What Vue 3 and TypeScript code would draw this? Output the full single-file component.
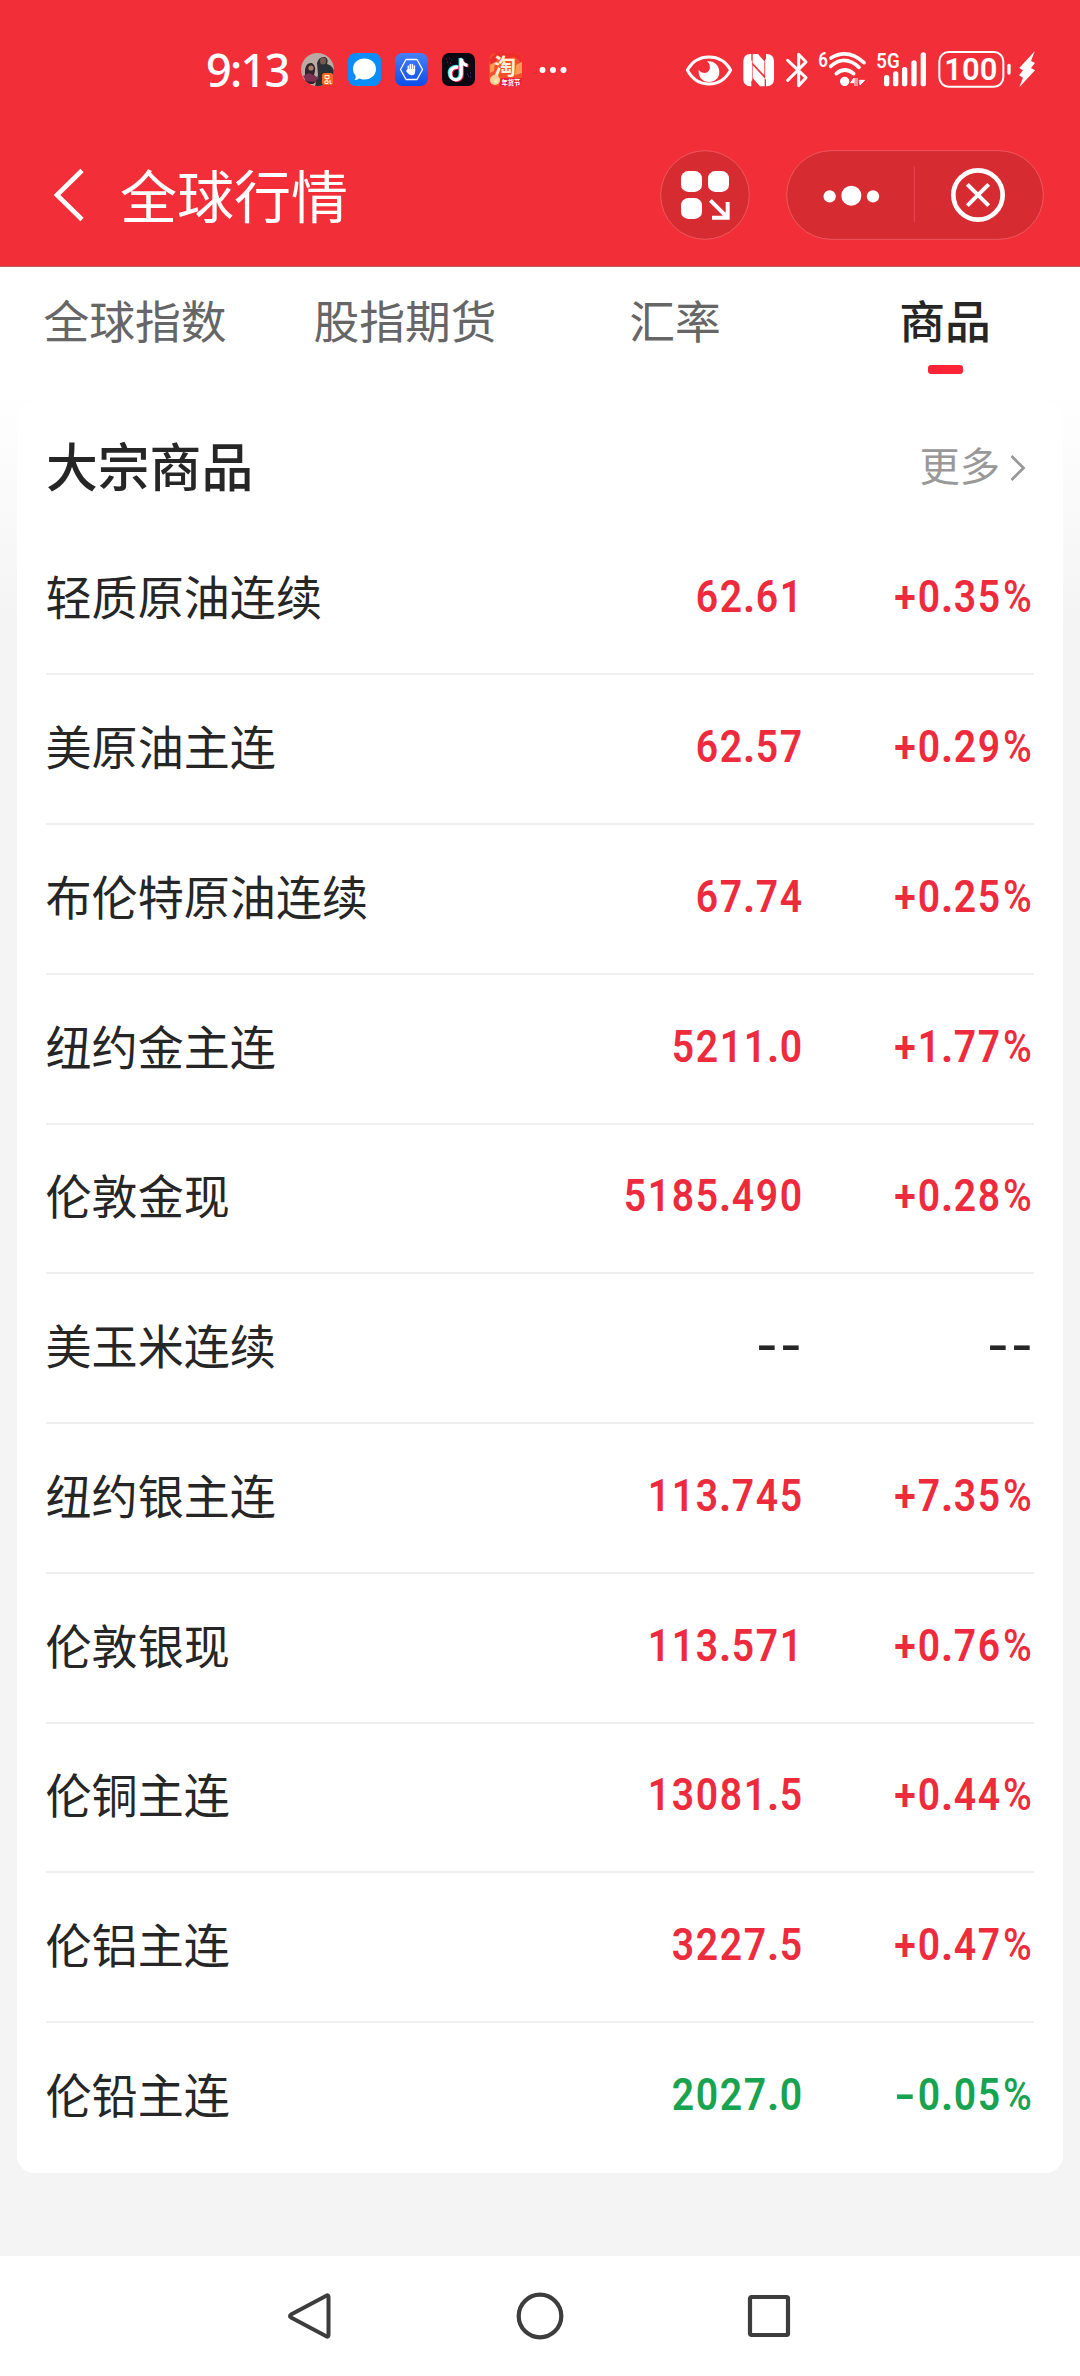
<script setup lang="ts">
interface Quote {
  name: string
  price: string
  change: string
}

const tabs: string[] = ['全球指数', '股指期货', '汇率', '商品']
const activeTab = '商品'

const quotes: Quote[] = [
  { name: '轻质原油连续', price: '62.61', change: '+0.35%' },
  { name: '美原油主连', price: '62.57', change: '+0.29%' },
  { name: '布伦特原油连续', price: '67.74', change: '+0.25%' },
  { name: '纽约金主连', price: '5211.0', change: '+1.77%' },
  { name: '伦敦金现', price: '5185.490', change: '+0.28%' },
  { name: '美玉米连续', price: '--', change: '--' },
  { name: '纽约银主连', price: '113.745', change: '+7.35%' },
  { name: '伦敦银现', price: '113.571', change: '+0.76%' },
  { name: '伦铜主连', price: '13081.5', change: '+0.44%' },
  { name: '伦铝主连', price: '3227.5', change: '+0.47%' },
  { name: '伦铅主连', price: '2027.0', change: '-0.05%' },
]

function tone(q: Quote): string {
  if (q.change.startsWith('+')) return 'up'
  return q.change === '--' ? 'flat' : 'down'
}

function glyphClass(ch: string): string {
  if (ch === '-') return 'dash'
  if (ch === '.') return 'dot'
  return ch === '%' ? 'pct' : 'digit'
}
</script>

<template>
  <div class="screen">
    <header class="top">
      <div class="status">
        <span class="clock">9:13</span>
        <div class="apps">
          <svg width="33" height="33" viewBox="0 0 33 33">
            <defs><clipPath id="av"><circle cx="16.5" cy="16.5" r="16.5" /></clipPath></defs>
            <g clip-path="url(#av)">
              <rect width="33" height="33" fill="#b9aba3" />
              <path d="M16 10Q18 3 24 4Q28 6 26 11Q33 13 33 20V33H14L17 22Z" fill="#2b3037" />
              <ellipse cx="22" cy="8" rx="3" ry="3.6" fill="#765b50" />
              <path d="M4 17Q5 9 11 10Q16 13 13 22L18 27L12 31H4Z" fill="#33212b" />
              <path d="M2 23L8 20L18 25L14 29L5 28Z" fill="#7b3150" />
              <circle cx="10" cy="15" r="2.6" fill="#a77d6c" />
            </g>
            <rect x="21" y="20" width="11" height="12" rx="2.5" fill="#f4691e" />
            <path d="M24 22.500h4v3h-4zM24 28h3v2.500h-3zM26 25.500v2.500M29 27v3.500h1.500" fill="none" stroke="#fff" stroke-width="1" />
          </svg>
          <svg width="33" height="33" viewBox="0 0 33 33">
            <rect width="33" height="33" rx="7.500" fill="#0a8dfb" />
            <path d="M16.500 5.500C23 5.500 28 10 28 16S23 26.500 16.500 26.500C14.500 26.500 12.500 26 11 25.500C9.500 26.700 8 27 6.500 27C7.700 25.500 8 24 7.500 22.500C6 20.500 5 18.500 5 16C5 10 10 5.500 16.500 5.500Z" fill="#fff" />
          </svg>
          <svg width="33" height="33" viewBox="0 0 33 33">
            <defs><linearGradient id="bl" x1="0" y1="0" x2="0" y2="1"><stop offset="0" stop-color="#4581f8" /><stop offset="1" stop-color="#0d4de8" /></linearGradient></defs>
            <rect width="33" height="33" rx="7.500" fill="url(#bl)" />
            <path d="M11 6.500H22L27.500 16.500L22 26.500H11L5.500 16.500Z" fill="none" stroke="#fff" stroke-width="1.300" stroke-linejoin="round" />
            <path d="M13.300 18V13.300M15.300 17V11.500M17.400 17V11.500M19.400 18V13" stroke="#fff" stroke-width="1.500" stroke-linecap="round" />
            <path d="M12.600 16H20.100V19Q20 22.300 16.800 22.300Q14.500 22.300 13 20.500L10.800 17.800L12 17.300Z" fill="#fff" />
          </svg>
          <svg width="33" height="33" viewBox="0 0 33 33">
            <rect width="33" height="33" rx="7" fill="#0b0713" />
            <g fill="none" stroke-width="3.300">
              <path d="M16.300 14.200C12 13.700 8.300 16 8.300 20.300S11 26.800 14 26.800S19.200 24.600 19.200 21V5.500C19.500 9.500 22 12 25.500 12.300" transform="translate(-1 -.6)" stroke="#25e6e2" />
              <path d="M16.300 14.200C12 13.700 8.300 16 8.300 20.300S11 26.800 14 26.800S19.200 24.600 19.200 21V5.500C19.500 9.500 22 12 25.500 12.300" transform="translate(1 .6)" stroke="#fb2b5c" />
              <path d="M16.300 14.200C12 13.700 8.300 16 8.300 20.300S11 26.800 14 26.800S19.200 24.600 19.200 21V5.500C19.500 9.500 22 12 25.500 12.300" stroke="#fff" />
            </g>
            <path d="M4 6h1M7 5h1M9 7h1M5 9h1M8 10h1" stroke="#a01b49" stroke-width="1" />
            <path d="M25 21h1M28 20h1M26 23h1M28 24h1" stroke="#3845ae" stroke-width="1" />
          </svg>
          <svg width="33" height="33" viewBox="0 0 33 33">
            <rect width="33" height="33" rx="7" fill="#f6502b" />
            <path d="M0 7Q6 1 7 0H26Q33 0 33 10L26 4L8 6L3 14Z" fill="#ed2d2c" />
            <path d="M1 12L6 9L5 18L1 20ZM27 12L33 9V20L26 22Z" fill="#fb9b56" />
            <text class="cjk" x="5" y="20.500" font-size="22" font-weight="700" fill="#fff1d6">淘</text>
            <path d="M12 25H33V26Q33 33 26 33H10Z" fill="#e51d3a" />
            <text class="cjk" x="12.500" y="31.500" font-size="6.300" font-weight="700" fill="#fff">年货节</text>
            <circle cx="6" cy="27" r="5" fill="#fbd094" /><circle cx="7" cy="28" r="2" fill="#fff0b4" />
          </svg>
        </div>
        <svg class="more-dots" width="28" height="8" viewBox="0 0 28 8">
          <circle cx="3.500" cy="4" r="3" fill="#fff" /><circle cx="14" cy="4" r="3" fill="#fff" /><circle cx="24.500" cy="4" r="3" fill="#fff" />
        </svg>
        <div class="system">
          <svg width="46" height="38" viewBox="48 61 138 114">
            <path d="M52 118C82 66 152 66 182 118C152 174 82 174 52 118Z" fill="none" stroke="#fff" stroke-width="9" stroke-linejoin="round" />
            <path d="M111 92C133 89 148 105 148 124C148 143 134 154 117 154C98 154 84 139 86 117C94 128 109 130 116 121C123 112 120 99 111 92Z" fill="#fff" />
          </svg>
          <svg class="nfc" width="32" height="38" viewBox="221 61 96 114">
            <path d="M243 70Q222 71 222 92V146Q222 166 243 167H246V70Z" fill="#fff" />
            <path d="M292 70Q314 71 314 92V146Q314 166 292 167H290V70Z" fill="#fff" />
            <path d="M250 70H266L285 92V134L250 96Z" fill="#fff" />
            <path d="M250 104L286 143V167H272L250 142Z" fill="#fff" />
            <path d="M246 90V150M290 86V146" stroke="#fff" stroke-width="5" />
          </svg>
          <svg class="bt" width="24" height="38" viewBox="350 61 72 114">
            <path d="M355 89L410 141L388 165V71L410 94L355 149" fill="none" stroke="#fff" stroke-width="9" stroke-linejoin="round" stroke-linecap="round" />
          </svg>
          <svg class="wifi" width="49" height="38" viewBox="445 61 147 114">
            <text class="sans" x="446" y="108" font-size="60" font-weight="600" textLength="29" lengthAdjust="spacingAndGlyphs" fill="#fff">6</text>
            <g fill="none" stroke="#fff" stroke-width="11" stroke-linecap="round">
              <path d="M484 82Q534 52 583 96" /><path d="M483 107Q525 70 568 110" /><path d="M500 129Q525 107 552 129" />
            </g>
            <circle cx="525" cy="152" r="14" fill="#fff" />
            <path d="M543 156L553 142V156ZM556 142V166M562 142V166M569 149H585L571 163Z" fill="#fff" stroke="#fff" stroke-width="3" />
          </svg>
          <svg class="cell" width="51" height="38" viewBox="620 61 153 114">
            <text class="sans" x="621" y="111" font-size="58" font-weight="600" textLength="70" lengthAdjust="spacingAndGlyphs" fill="#fff">5G</text>
            <path d="M652 141V159M679 130V159M706 117V159M734 97V159M762 73V159" stroke="#fff" stroke-width="16" stroke-linecap="round" />
          </svg>
          <svg class="battery" width="74" height="38" viewBox="806 61 222 114">
            <rect x="810" y="64" width="192" height="104" rx="28" fill="none" stroke="#fff" stroke-width="6" />
            <text class="sans" x="825" y="149" font-size="95" font-weight="600" textLength="159" lengthAdjust="spacingAndGlyphs" fill="#fff">100</text>
            <rect x="1014" y="99" width="10" height="33" rx="5" fill="#fff" />
          </svg>
          <svg class="bolt" width="18" height="38" viewBox="1046 61 54 114">
            <path d="M1096 62L1050 112L1061 119L1049 134L1061 141L1050 170L1097 119L1085 112L1097 97L1085 91Z" fill="#fff" />
          </svg>
        </div>
      </div>
      <div class="nav">
        <svg class="back" width="32" height="56" viewBox="0 0 32 56">
          <path d="M29 3.500L4 28L29 52.500" fill="none" stroke="#fff" stroke-width="4.600" />
        </svg>
        <h1>全球行情</h1>
        <svg class="grid" width="90" height="90" viewBox="60 60 270 270">
          <circle cx="195" cy="195" r="133" fill="#d62b31" stroke="#f0575e" stroke-width="3" />
          <g fill="#fff"><rect x="123" y="123" width="63" height="63" rx="22" /><rect x="204" y="123" width="63" height="63" rx="22" /><rect x="123" y="204" width="63" height="63" rx="22" /></g>
          <path d="M211 211L260 260M216 263H263V216" fill="none" stroke="#fff" stroke-width="12" />
        </svg>
        <svg class="capsule" width="258" height="90" viewBox="438 60 774 270">
          <rect x="440" y="62" width="770" height="266" rx="133" fill="#d62b31" stroke="#f0575e" stroke-width="3" />
          <path d="M823 109V276" stroke="#e6474d" stroke-width="3" />
          <g fill="#fff"><circle cx="569" cy="199" r="18.500" /><circle cx="634" cy="197" r="30" /><circle cx="699" cy="199" r="18.500" /></g>
          <g fill="none" stroke="#fff"><circle cx="1014" cy="195" r="74" stroke-width="14" /><path d="M982 163L1046 227M1046 163L982 227" stroke-width="12" /></g>
        </svg>
      </div>
    </header>

    <main class="body">
      <nav class="tabs">
        <div v-for="t in tabs" :key="t" class="tab" :class="{ active: t === activeTab }">
          <span>{{ t }}</span>
        </div>
      </nav>
      <section class="card">
        <div class="card-head">
          <h2>大宗商品</h2>
          <span class="more">更多</span>
          <svg class="chev" width="16" height="28" viewBox="0 0 16 28">
            <path d="M1.500 2L13.500 14L1.500 26" fill="none" stroke="#999" stroke-width="2.800" />
          </svg>
        </div>
        <div v-for="q in quotes" :key="q.name" class="row" :class="tone(q)">
          <span class="name">{{ q.name }}</span>
          <span class="num price"><i v-for="(c, i) in q.price" :key="i" :class="glyphClass(c)">{{ c }}</i></span>
          <span class="num change"><i v-for="(c, i) in q.change" :key="i" :class="glyphClass(c)">{{ c }}</i></span>
        </div>
      </section>
    </main>

    <footer class="keys">
      <svg width="48" height="48" viewBox="0 0 48 48"><path d="M39.300 3.800Q41.500 2.500 41.500 5V43Q41.500 45.500 39.300 44.200L4 25.500Q2 24 4 22.500Z" fill="none" stroke="#3d3d3d" stroke-width="4" stroke-linejoin="round" /></svg>
      <svg width="48" height="48" viewBox="0 0 48 48"><circle cx="24" cy="24" r="21.300" fill="none" stroke="#3d3d3d" stroke-width="4.200" /></svg>
      <svg width="48" height="48" viewBox="0 0 48 48"><rect x="5" y="5" width="38" height="38" rx="1.500" fill="none" stroke="#3d3d3d" stroke-width="4.200" /></svg>
    </footer>
  </div>
</template>

<style>
body { margin: 0; }
</style>

<style scoped>
.screen {
  width: 1080px;
  height: 2376px;
  display: flex;
  flex-direction: column;
  overflow: hidden;
  font-family: "Noto Sans CJK SC", sans-serif;
  color: #262626;
}
svg { display: block; flex: none; overflow: visible; }
.cjk { font-family: "Noto Sans CJK SC", sans-serif; }
.sans { font-family: Roboto, sans-serif; }
.top {
  box-sizing: border-box;
  height: 267px;
  background: #f22f38;
  border-bottom: 1px solid #b8575d;
  flex: none;
}
.status {
  height: 139px;
  display: flex;
  align-items: center;
  padding-left: 206px;
}
.clock {
  width: 95px;
  font: 500 45px/60px "Noto Sans", sans-serif;
  letter-spacing: -1.7px;
  color: #fff;
  white-space: nowrap;
}
.apps { display: flex; gap: 14px; }
.more-dots { margin-left: 17px; }
.system { display: flex; align-items: center; margin-left: 119px; }
.nfc { margin-left: 11px; }
.bt { margin-left: 11px; }
.wifi { margin-left: 8px; }
.cell { margin-left: 9px; }
.battery { margin-left: 11px; }
.bolt { margin-left: 6px; }
.nav { height: 112px; display: flex; align-items: center; }
.back { margin-left: 53px; }
h1 {
  margin: -5px 0 0 35px;
  width: 540px;
  font-size: 57px;
  line-height: 80px;
  font-weight: 400;
  color: #fff;
}
.capsule { margin-left: 36px; }
.body {
  box-sizing: border-box;
  height: 1989px;
  flex: none;
  background: linear-gradient(#fff 115px, #f4f4f4 355px);
}
.tabs { display: flex; height: 134px; }
.tab {
  flex: 1;
  display: flex;
  flex-direction: column;
  align-items: center;
  padding-top: 18px;
  font-size: 45.800px;
  line-height: 68px;
  color: #666;
}
.tab.active { color: #262626; font-weight: 500; }
.tab.active::after {
  content: "";
  width: 35px;
  height: 9px;
  margin-top: 12px;
  border-radius: 3px;
  background: #fd2438;
}
.card {
  box-sizing: border-box;
  margin: 0 17px;
  padding: 0 29px 0 28.500px;
  background: #fff;
  border-radius: 17px;
}
.card-head { height: 124.500px; display: flex; align-items: center; padding: 0 8.500px 0 .5px; }
h2 { margin: 4px auto 0 0; font-size: 51.800px; line-height: 76px; font-weight: 500; }
.more { font-size: 40.300px; line-height: 60px; color: #999; padding-top: 2px; }
.chev { margin: 9px 0 0 9.500px; }
.row {
  box-sizing: border-box;
  height: 149.760px;
  display: flex;
  align-items: center;
  border-bottom: 2px solid #efefef;
}
.row:last-child { border-bottom-color: transparent; }
.name { flex: 1; font-size: 46.080px; line-height: 68px; margin-top: -8px; }
.num {
  display: flex;
  justify-content: flex-end;
  font: 600 45px/60px Roboto, sans-serif;
  margin-top: -4px;
}
.num i { font-style: normal; display: flex; justify-content: center; transform: scaleX(.87); }
.price { width: 300px; }
.change { width: 231px; }
.digit { width: 24px; }
.num .dot { width: 11.800px; transform: none; }
.num .pct { width: 33px; font-weight: 500; }
.num .dash { width: 24px; transform: scaleX(1.300); }
.up .num { color: #ee2b3c; }
.down .num { color: #18a350; }
.keys {
  height: 120px;
  background: #fff;
  display: flex;
  justify-content: center;
  align-items: center;
  gap: 181px;
}
</style>
